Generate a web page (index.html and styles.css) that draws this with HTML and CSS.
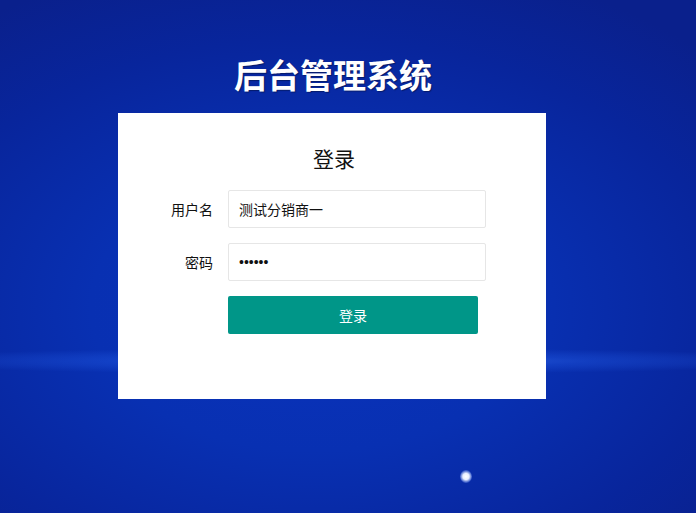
FILE: index.html
```html
<!DOCTYPE html>
<html lang="zh-CN">
<head>
    <meta charset="UTF-8">
    <title>后台管理系统</title>
    <link rel="stylesheet" href="styles.css">
</head>
<body>
    <div class="login-page">
        <span class="glow"></span>
        <span class="spark"></span>
        <h1 class="site-title">后台管理系统</h1>
        <div class="login-box">
            <h2 class="login-title">登录</h2>
            <form class="login-form">
                <div class="form-item">
                    <label class="form-label">用户名</label>
                    <div class="form-block">
                        <input class="form-input" type="text" value="测试分销商一">
                    </div>
                </div>
                <div class="form-item">
                    <label class="form-label">密码</label>
                    <div class="form-block">
                        <input class="form-input pwd-input" type="password" value="123456">
                    </div>
                </div>
                <div class="form-item">
                    <div class="form-block">
                        <button class="login-btn" type="button">登录</button>
                    </div>
                </div>
            </form>
        </div>
    </div>
</body>
</html>
```

FILE: styles.css
```css
* {
    margin: 0;
    padding: 0;
    box-sizing: border-box;
}
html, body {
    height: 100%;
}
body {
    font-family: "Noto Sans CJK SC", "Liberation Sans", sans-serif;
    font-size: 14px;
    color: #333;
    background: #0828a4;
}
.login-page {
    position: relative;
    height: 100%;
    overflow: hidden;
    padding-top: 50px;
    background: radial-gradient(ellipse 80% 70% at 45% 60%, #0a33bd 0%, #0830b2 40%, #08259c 75%, #0a208c 100%);
}
.glow {
    position: absolute;
    left: 0;
    right: 0;
    top: 348px;
    height: 26px;
    background: radial-gradient(ellipse 70% 50% at 50% 50%, rgba(70, 130, 255, .6) 0%, rgba(40, 100, 240, .3) 50%, rgba(20, 70, 220, 0) 100%);
}
.spark {
    position: absolute;
    left: 460px;
    top: 470px;
    width: 12px;
    height: 13px;
    border-radius: 50%;
    background: radial-gradient(circle, #fff 0%, #e8eeff 35%, rgba(150, 180, 255, .4) 65%, rgba(100, 140, 255, 0) 100%);
}
.site-title {
    position: relative;
    text-align: center;
    font-size: 33px;
    font-weight: bold;
    color: #fff;
    line-height: 48px;
    margin-left: -30px;
    text-shadow: 1px 1px 1px rgba(0, 0, 0, .35);
}
.login-box {
    position: relative;
    width: 428px;
    height: 286px;
    margin: 15px 0 0 118px;
    background: #fff;
    padding-top: 31px;
}
.login-title {
    text-align: center;
    font-size: 21px;
    font-weight: normal;
    color: #111;
    line-height: 28px;
    margin-left: 4px;
    margin-bottom: 18px;
}
.form-item {
    display: flex;
    margin-bottom: 15px;
}
.form-label {
    width: 110px;
    padding: 9px 15px 9px 0;
    line-height: 20px;
    text-align: right;
    color: #111;
}
.form-block {
    margin-left: 110px;
}
.form-label + .form-block {
    margin-left: 0;
}
.form-input {
    display: block;
    width: 258px;
    height: 38px;
    padding-left: 10px;
    border: 1px solid #e6e6e6;
    border-radius: 2px;
    background: #fff;
    font-family: inherit;
    font-size: 14px;
    color: #111;
    outline: none;
}
.pwd-input {
    font-family: "Liberation Sans", sans-serif;
    font-size: 14px;
}
.login-btn {
    display: block;
    width: 250px;
    height: 38px;
    border: none;
    border-radius: 2px;
    background: #009688;
    color: #fff;
    font-family: inherit;
    font-size: 14px;
    cursor: pointer;
}
```
